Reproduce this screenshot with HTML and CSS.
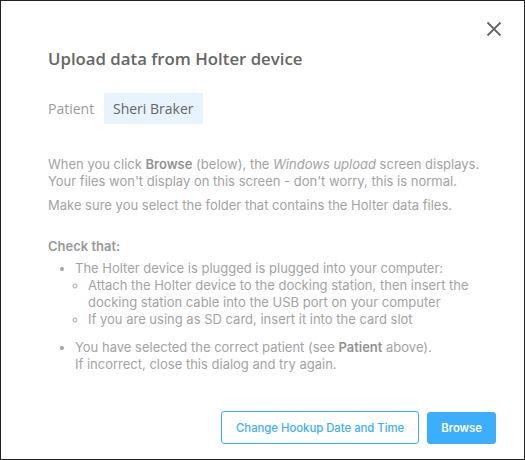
FILE: index.html
```html
<!DOCTYPE html>
<html>
<head>
<meta charset="utf-8">
<link rel="stylesheet" href="styles.css">
</head>
<body>
<div class="dialog">
  <button class="close" aria-label="Close">
    <svg width="16" height="16" viewBox="0 0 16 16"><path d="M1.5 1.5 L14.5 14.5 M14.5 1.5 L1.5 14.5" stroke="#666" stroke-width="1.8" fill="none"/></svg>
  </button>
  <h1 class="title">Upload data from Holter device</h1>
  <div class="patient">
    <span class="patient-label">Patient</span>
    <span class="patient-name">Sheri Braker</span>
  </div>
  <div class="content">
    <p class="para">When you click <b>Browse</b> (below), the <i>Windows upload</i> screen displays. Your files won't display on this screen - don't worry, this is normal.</p>
    <p class="para">Make sure you select the folder that contains the Holter data files.</p>
    <p class="check">Check that:</p>
    <ul class="list">
      <li>The Holter device is plugged is plugged into your computer:
        <ul class="sublist">
          <li>Attach the Holter device to the docking station, then insert the docking station cable into the USB port on your computer</li>
          <li>If you are using as SD card, insert it into the card slot</li>
        </ul>
      </li>
      <li class="gap">You have selected the correct patient (see <b>Patient</b> above).<br>If incorrect, close this dialog and try again.</li>
    </ul>
  </div>
  <div class="footer">
    <button class="btn btn-outline">Change Hookup Date and Time</button>
    <button class="btn btn-primary">Browse</button>
  </div>
</div>
</body>
</html>
```

FILE: styles.css
```css
html, body {
  margin: 0;
  padding: 0;
  background: #fff;
}
.dialog {
  position: relative;
  box-sizing: border-box;
  width: 525px;
  height: 460px;
  border: 1px solid #222;
  padding: 46px 28px 15px 47px;
  display: flex;
  flex-direction: column;
  font-family: Inter, "Noto Sans", sans-serif;
}
.close {
  position: absolute;
  top: 20px;
  right: 22px;
  width: 16px;
  height: 16px;
  padding: 0;
  border: 0;
  background: none;
  display: flex;
}
.title {
  margin: 0;
  font-family: "Open Sans", sans-serif;
  font-weight: 600;
  font-size: 16.8px;
  line-height: 24px;
  color: #666;
}
.patient {
  display: flex;
  align-items: center;
  margin-top: 22px;
  font-family: "Open Sans", sans-serif;
  font-size: 14px;
}
.patient-label {
  color: #9b9b9b;
  width: 56px;
}
.patient-name {
  background: #e8f4fd;
  color: #666;
  padding: 0 9px;
  height: 31px;
  line-height: 31px;
}
.content {
  margin-top: 32px;
  font-size: 13px;
  line-height: 17px;
  color: #a3a3a3;
  flex: 1;
}
.content b {
  color: #929292;
  font-weight: 600;
}
.para {
  margin: 0 0 7px;
}
.check {
  margin: 24px 0 5px;
  font-weight: 600;
  color: #999;
}
.list {
  margin: 0;
  padding-left: 27px;
}
.sublist {
  margin: 0;
  padding-left: 13px;
  list-style-type: circle;
}
.list li.gap {
  margin-top: 11px;
}
.footer {
  display: flex;
  justify-content: flex-end;
  align-items: center;
  gap: 8px;
}
.btn {
  font-family: Inter, sans-serif;
  font-size: 11.3px;
  border-radius: 3px;
  height: 33px;
  cursor: pointer;
}
.btn-outline {
  background: #fff;
  border: 1px solid #3daefc;
  color: #3daefc;
  padding: 0 14px;
  font-weight: 500;
}
.btn-primary {
  background: #3daefc;
  border: 1px solid #3daefc;
  color: #fff;
  font-weight: 600;
  padding: 0 13px;
  height: 32px;
}
```
